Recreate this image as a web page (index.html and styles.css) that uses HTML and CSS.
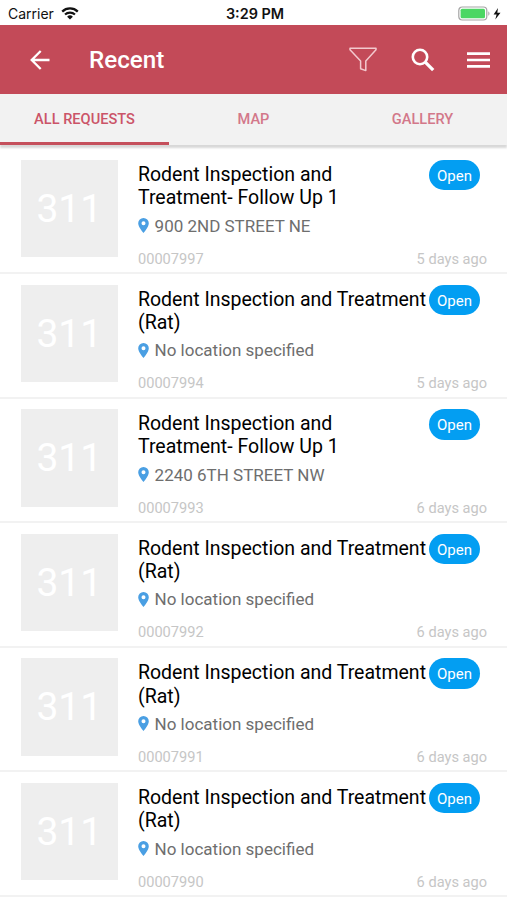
FILE: index.html
```html
<!DOCTYPE html>
<html lang="en">
<head>
    <meta charset="UTF-8" />
    <meta name="viewport" content="width=device-width, initial-scale=1.0" />
    <title>Recent</title>
    <link rel="stylesheet" href="styles.css">
</head>
<body>
    <div class="status-bar">
        <div class="carrier">
            <span>Carrier</span>
            <svg class="wifi" viewBox="0 0 18 13" width="18" height="13" fill="none" stroke="#111">
                <path d="M1.2 4.6a11.2 11.2 0 0 1 15.6 0" stroke-width="2.3" />
                <path d="M4 7.6a7.2 7.2 0 0 1 10 0" stroke-width="2.1" />
                <path d="M9 12.6L6.1 9.7a4.2 4.2 0 0 1 5.8 0z" fill="#111" stroke="none" />
            </svg>
        </div>
        <div class="clock">3:29 PM</div>
        <div class="power">
            <svg viewBox="0 0 44 16" width="44" height="16">
                <rect x="0.8" y="1" width="28" height="13" rx="3.5" fill="#fff" stroke="#a5a5a5" stroke-width="1.2" />
                <rect x="2.6" y="2.8" width="24.4" height="9.4" rx="1.5" fill="#4bd763" />
                <path d="M30.3 5.2c1.6.8 1.6 3.8 0 4.6z" fill="#a5a5a5" />
                <path d="M40 2L35.6 8.4h3L37.3 13.6l5.2-6.8h-3.2z" fill="#111" />
            </svg>
        </div>
    </div>

    <header class="header">
        <svg class="back" viewBox="0 0 20 20" width="20" height="20" fill="none" stroke="#fff" stroke-width="2.3">
            <path d="M19.5 10H2M10.7 1L1.7 10l9 9" />
        </svg>
        <h1>Recent</h1>
        <div class="actions">
            <svg viewBox="0 0 28 25" width="28" height="25" fill="none" stroke="#f3c9ce" stroke-width="1.5" stroke-linejoin="round">
                <path d="M1 1.3h26v1.4L16.8 14v9.6l-5.2-1.8V14L1 2.7z" />
            </svg>
            <svg viewBox="0 0 24 24" width="24" height="24" fill="none" stroke="#fff">
                <circle cx="9" cy="9" r="7.2" stroke-width="2.6" />
                <path d="M14.2 14.2l8 8" stroke-width="3.3" />
            </svg>
            <svg viewBox="0 0 23 16" width="23" height="16" stroke="#fff" stroke-width="2.6">
                <path d="M0 1.6h23M0 8h23M0 14.4h23" />
            </svg>
        </div>
    </header>

    <nav class="tabs">
        <div class="tab active">ALL REQUESTS</div>
        <div class="tab">MAP</div>
        <div class="tab">GALLERY</div>
    </nav>

    <main class="list" id="list"></main>

    <script>
    const rat = 'Rodent Inspection and Treatment (Rat)';
    const followUp = 'Rodent Inspection and Treatment- Follow Up 1';
    const none = 'No location specified';

    const requests = [
        { id: '00007997', title: followUp, location: '900 2ND STREET NE', age: '5 days ago' },
        { id: '00007994', title: rat, location: none, age: '5 days ago' },
        { id: '00007993', title: followUp, location: '2240 6TH STREET NW', age: '6 days ago' },
        { id: '00007992', title: rat, location: none, age: '6 days ago' },
        { id: '00007991', title: rat, location: none, age: '6 days ago' },
        { id: '00007990', title: rat, location: none, age: '6 days ago' }
    ];

    const list = document.getElementById('list');
    requests.forEach(r => {
        const row = document.createElement('article');
        row.className = 'request';
        row.innerHTML = `
            <div class="thumb">311</div>
            <div class="info">
                <div class="top">
                    <h2>${r.title}</h2>
                    <span class="status">Open</span>
                </div>
                <div class="location">
                    <svg viewBox="0 0 11 15" width="11" height="15"><path fill="#4a9fe3" fill-rule="evenodd" d="M5.5 0A5.3 5.3 0 0 0 .2 5.3C.2 9.2 5.5 15 5.5 15s5.3-5.8 5.3-9.7A5.3 5.3 0 0 0 5.5 0zm0 3.3a2 2 0 1 1 0 4 2 2 0 0 1 0-4z" /></svg>
                    <span>${r.location}</span>
                </div>
                <div class="meta"><span>${r.id}</span><span>${r.age}</span></div>
            </div>
        `;
        list.appendChild(row);
    });
    </script>
</body>
</html>
```

FILE: styles.css
```css
* { box-sizing: border-box; }

body {
    margin: 0;
    height: 900px;
    overflow: hidden;
    background: #fff;
    color: #111;
    font-family: Roboto, sans-serif;
}

.status-bar {
    display: grid;
    grid-template-columns: 1fr auto 1fr;
    align-items: center;
    height: 25px;
    padding: 2px 5px 0 8px;
    font-family: Inter, sans-serif;
    font-size: 14px;
}
.carrier { display: flex; align-items: center; gap: 7px; }
.clock { font-size: 14.4px; font-weight: 600; }
.power { display: flex; justify-content: flex-end; }

.header {
    display: flex;
    align-items: center;
    height: 69px;
    padding: 0 17px 0 30px;
    background: #c34a58;
    color: #fff;
}
.header h1 {
    margin: 0 0 0 39px;
    font-size: 24.2px;
    font-weight: 500;
}
.actions {
    display: flex;
    align-items: center;
    gap: 33px;
    margin-left: auto;
}
.actions svg:nth-child(2) { margin: 0 -1px 0 1px; }

.tabs {
    display: flex;
    height: 51px;
    background: #f2f2f2;
    box-shadow: 0 3px 2px #d8d8d8;
}
.tab {
    flex: 1;
    padding-top: 16px;
    text-align: center;
    font-size: 14.6px;
    line-height: 18px;
    font-weight: 500;
    color: #d3788a;
}
.tab.active {
    color: #cb5468;
    border-bottom: 3px solid #c5505c;
}

.list { padding-top: 4.4px; }

.request {
    display: flex;
    height: 124.6px;
    padding: 10.6px 20px 0 20.6px;
    border-bottom: 2px solid #f2f2f2;
}
.thumb {
    flex: none;
    width: 97.4px;
    height: 97.4px;
    background: #eee;
    color: #fff;
    font-size: 39px;
    line-height: 99px;
    text-align: center;
}
.info {
    flex: 1;
    display: flex;
    flex-direction: column;
    margin-left: 20px;
}
.top {
    display: flex;
    justify-content: space-between;
    align-items: flex-start;
    padding-right: 7px;
}
.top h2 {
    width: 291px;
    margin: 3px 0 0;
    color: #000;
    font-size: 19.5px;
    font-weight: 400;
    line-height: 23.3px;
}
.status {
    flex: none;
    width: 51px;
    height: 30.5px;
    margin-left: -1px;
    border-radius: 16px;
    background: #039ef2;
    color: #fff;
    font-size: 15px;
    line-height: 32px;
    text-align: center;
}
.location {
    display: flex;
    align-items: center;
    gap: 5.6px;
    margin-top: 6px;
    font-size: 17px;
    line-height: 20px;
    color: #6e6e6e;
}
.meta {
    display: flex;
    justify-content: space-between;
    margin-top: 14px;
    font-size: 14.6px;
    line-height: 18px;
    color: #c6c6c6;
}
```
